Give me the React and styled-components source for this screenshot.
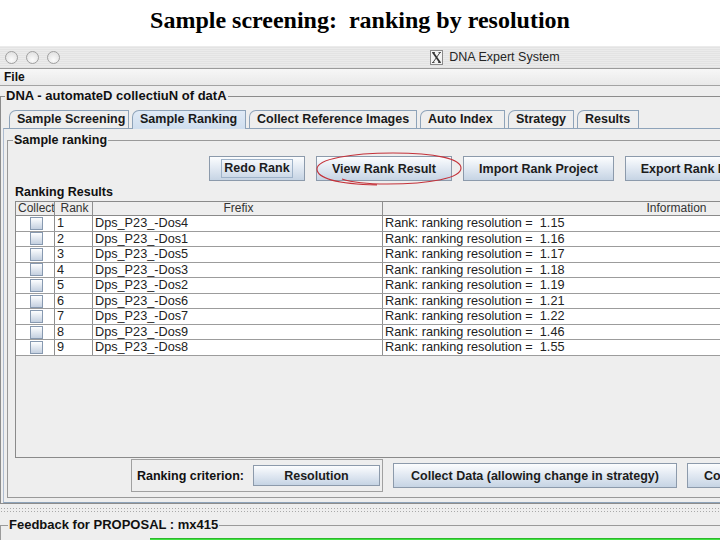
import React from "react";
import styled, { createGlobalStyle } from "styled-components";

const GlobalStyle = createGlobalStyle`
  html, body {
    margin: 0;
    padding: 0;
    background: #fff;
  }
  body {
    width: 720px;
    height: 540px;
    overflow: hidden;
    font-family: "Liberation Sans", Arial, sans-serif;
  }
`;

const Page = styled.div`
  width: 720px;
  height: 540px;
  overflow: hidden;
  display: flex;
  flex-direction: column;
`;

const Heading = styled.h1`
  margin: 0;
  height: 46px;
  box-sizing: border-box;
  padding-top: 6px;
  font-family: "Liberation Serif", "Times New Roman", serif;
  font-size: 24px;
  font-weight: bold;
  line-height: 28px;
  text-align: center;
  white-space: pre;
  color: #000;
  flex: none;
`;

const Window = styled.div`
  width: 990px;
  flex: 1;
  background: #eeeeee;
  display: flex;
  flex-direction: column;
`;

const TitleBar = styled.div`
  height: 22px;
  flex: none;
  border-bottom: 1px solid #9b9b9b;
  display: grid;
  grid-template-columns: 1fr auto 1fr;
  align-items: center;
  background: repeating-linear-gradient(
    to bottom,
    #ebebeb 0px,
    #ebebeb 1px,
    #e3e3e3 1px,
    #e3e3e3 2px
  );
`;

const Lights = styled.div`
  display: flex;
  gap: 8px;
  padding-left: 5px;
`;

const Light = styled.span`
  width: 13px;
  height: 13px;
  box-sizing: border-box;
  border-radius: 50%;
  border: 1px solid #9f9f9f;
  background: radial-gradient(circle at 50% 70%, #fbfbfb, #dcdcdc);
`;

const WindowTitle = styled.div`
  display: flex;
  align-items: center;
  gap: 6px;
  font-size: 12.5px;
  color: #262626;
`;

const MenuBar = styled.div`
  height: 16px;
  flex: none;
  border-bottom: 1px solid #a3a3a3;
  background: linear-gradient(#f7f7f7, #e9e9e9);
  padding-left: 4px;
  font-size: 12px;
  font-weight: bold;
  line-height: 16px;
  color: #111;
`;

const Group = styled.fieldset`
  margin: 0;
  padding: 0;
  min-width: 0;
  border: 1px solid ${(p) => p.$line || "#9a9a9a"};
  ${(p) => (p.$noBottom ? "border-bottom: none;" : "")}
`;

const Caption = styled.legend`
  padding: 0 1px;
  margin-left: ${(p) => p.$indent || 0}px;
  font-size: ${(p) => p.$size || 12.5}px;
  font-weight: bold;
  line-height: 16px;
  color: #111;
  white-space: nowrap;
`;

const Outer = styled(Group)`
  margin-top: 2px;
  flex: none;
`;

const TabPane = styled.div`
  margin: 6px 0 0 2px;
  display: flex;
  flex-direction: column;
`;

const TabStrip = styled.div`
  display: flex;
  gap: 3px;
  padding-left: 6px;
  height: 18px;
`;

const Tab = styled.div`
  position: relative;
  z-index: ${(p) => (p.$active ? 1 : 0)};
  width: ${(p) => p.$w}px;
  height: ${(p) => (p.$active ? 19 : 18)}px;
  box-sizing: border-box;
  flex: none;
  border: 1px solid #8ea3b9;
  border-bottom: none;
  border-top-left-radius: 7px;
  background: ${(p) =>
    p.$active ? "linear-gradient(#e0eaf6, #cfdeee)" : "#eeeeee"};
  padding-left: 7px;
  font-size: 12.5px;
  font-weight: bold;
  line-height: 17px;
  color: #1a1a1a;
  white-space: nowrap;
  overflow: hidden;
`;

const TabBody = styled.div`
  border: 1px solid #8ea3b9;
  border-left-color: #aebcd0;
  border-right: none;
  padding: 3px 0 4px 3px;
`;

const ButtonRow = styled.div`
  position: relative;
  display: flex;
  gap: 11px;
  padding: 8px 0 0 201px;
`;

const Button = styled.button`
  width: ${(p) => p.$w}px;
  height: ${(p) => p.$h || 25}px;
  box-sizing: border-box;
  flex: none;
  margin: 0;
  padding: 0;
  border: 1px solid #8c9aab;
  border-radius: 0;
  background: linear-gradient(#fcfdfe, #e3eaf3 45%, #c6d4e4);
  font-family: "Liberation Sans", Arial, sans-serif;
  font-size: 12.5px;
  font-weight: bold;
  color: #1c1c1c;
  white-space: nowrap;
  overflow: hidden;
  display: flex;
  align-items: center;
  justify-content: center;
`;

const Focus = styled.span`
  border: 1px solid #9fb3c9;
  padding: 1px 2px;
  line-height: 15px;
`;

const Annotation = styled.svg`
  position: absolute;
  left: 307px;
  top: 3px;
  pointer-events: none;
`;

const SectionLabel = styled.div`
  margin: 4px 0 0 7px;
  font-size: 12.5px;
  font-weight: bold;
  line-height: 15px;
  color: #111;
`;

const ScrollPane = styled.div`
  margin: 1px 0 0 7px;
  height: 257px;
  box-sizing: border-box;
  border: 1px solid #8a8a8a;
  border-right: none;
  background: #eeeeee;
  overflow: hidden;
`;

const Row = styled.div`
  display: grid;
  grid-template-columns: 39px 38px 290px 586px;
  height: ${(p) => (p.$head ? 14 : 15.55)}px;
  box-sizing: border-box;
  border-bottom: 1px solid ${(p) => (p.$head ? "#8a8a8a" : "#9c9c9c")};
  background: ${(p) => (p.$head ? "#eeeeee" : "#fff")};
  width: 953px;
`;

const Cell = styled.div`
  border-right: 1px solid #8f8f8f;
  padding-left: 2px;
  font-size: ${(p) => (p.$head ? 12 : 12.7)}px;
  line-height: ${(p) => (p.$head ? 13 : 14.5)}px;
  color: ${(p) => (p.$head ? "#333" : "#222")};
  white-space: pre;
  overflow: hidden;
  display: flex;
  align-items: center;
  justify-content: ${(p) => (p.$center ? "center" : "flex-start")};
`;

const Check = styled.span`
  width: 13px;
  height: 13px;
  box-sizing: border-box;
  border: 1px solid #8799b0;
  background: linear-gradient(#fdfeff, #c4d0e0);
`;

const BottomRow = styled.div`
  margin-top: 1px;
  display: flex;
  align-items: center;
  gap: 10px;
  padding: 0 0 5px 123px;
`;

const CriterionPanel = styled.div`
  width: 252px;
  height: 33px;
  box-sizing: border-box;
  flex: none;
  border: 1px solid #a0a0a0;
  display: flex;
  align-items: center;
  gap: 9px;
  padding-left: 5px;
  font-size: 12.5px;
  font-weight: bold;
  color: #111;
`;

const Divider = styled.div`
  height: 6px;
  margin-top: 3px;
  flex: none;
  background-image: radial-gradient(#a9a9a9 0.7px, transparent 0.9px);
  background-size: 3px 3px;
`;

const Feedback = styled(Group)`
  margin-top: 4px;
  flex: 1;
`;

const ProgressBar = styled.div`
  margin: 5px 0 0 149px;
  height: 12px;
  background: #3fe23f;
  border-top: 1px solid #2cb82c;
`;

const XIcon = () => (
  <svg width="13" height="15" viewBox="0 0 13 15">
    <rect x="0.5" y="0.5" width="12" height="14" fill="#f3f3f3" stroke="#8a8a8a" />
    <path d="M3 2.5 L10 12.5" stroke="#333" strokeWidth="1.8" />
    <path d="M10 2.5 L3 12.5" stroke="#333" strokeWidth="0.9" />
    <path d="M2 2.5 H5 M8.5 2.5 H11 M2 12.5 H4.5 M8 12.5 H11" stroke="#333" strokeWidth="0.8" />
  </svg>
);

const tabs = [
  { label: "Sample Screening", w: 120 },
  { label: "Sample Ranking", w: 114, active: true },
  { label: "Collect Reference Images", w: 168 },
  { label: "Auto Index", w: 85 },
  { label: "Strategy", w: 66 },
  { label: "Results", w: 62 },
];

const results = [
  ["1", "Dps_P23_-Dos4", "1.15"],
  ["2", "Dps_P23_-Dos1", "1.16"],
  ["3", "Dps_P23_-Dos5", "1.17"],
  ["4", "Dps_P23_-Dos3", "1.18"],
  ["5", "Dps_P23_-Dos2", "1.19"],
  ["6", "Dps_P23_-Dos6", "1.21"],
  ["7", "Dps_P23_-Dos7", "1.22"],
  ["8", "Dps_P23_-Dos9", "1.46"],
  ["9", "Dps_P23_-Dos8", "1.55"],
];

const App = () => {
  return (
    <Page>
      <GlobalStyle />
      <Heading>{"Sample screening:  ranking by resolution"}</Heading>
      <Window>
        <TitleBar>
          <Lights>
            <Light />
            <Light />
            <Light />
          </Lights>
          <WindowTitle>
            <XIcon />
            DNA Expert System
          </WindowTitle>
          <div />
        </TitleBar>
        <MenuBar>File</MenuBar>

        <Outer $line="#8c8c8c">
          <Caption $indent={4} $size={13}>
            DNA - automateD collectiuN of datA
          </Caption>
          <TabPane>
            <TabStrip>
              {tabs.map((t) => (
                <Tab key={t.label} $w={t.w} $active={t.active}>
                  {t.label}
                </Tab>
              ))}
            </TabStrip>
            <TabBody>
              <Group $line="#999">
                <Caption $indent={5}>Sample ranking</Caption>
                <ButtonRow>
                  <Button $w={96}>
                    <Focus>Redo Rank</Focus>
                  </Button>
                  <Button $w={136}>View Rank Result</Button>
                  <Button $w={151}>Import Rank Project</Button>
                  <Button $w={151}>Export Rank Project</Button>
                  <Annotation width="148" height="36" viewBox="0 0 148 36">
                    <path
                      d="M62 34 C22 33 2 27 2 18 C2 8 36 2 78 2 C121 2 146 8 146 17 C146 27 116 33 72 33 C52 33 36 31 27 28"
                      fill="none"
                      stroke="#c4323a"
                      strokeWidth="1.1"
                    />
                  </Annotation>
                </ButtonRow>

                <SectionLabel>Ranking Results</SectionLabel>
                <ScrollPane>
                  <Row $head>
                    <Cell $head>Collect</Cell>
                    <Cell $head $center>Rank</Cell>
                    <Cell $head $center>Frefix</Cell>
                    <Cell $head $center>Information</Cell>
                  </Row>
                  {results.map(([rank, prefix, res]) => (
                    <Row key={rank}>
                      <Cell $center>
                        <Check />
                      </Cell>
                      <Cell>{rank}</Cell>
                      <Cell>{prefix}</Cell>
                      <Cell>{`Rank: ranking resolution =  ${res}`}</Cell>
                    </Row>
                  ))}
                </ScrollPane>

                <BottomRow>
                  <CriterionPanel>
                    Ranking criterion:
                    <Button $w={127} $h={21}>
                      Resolution
                    </Button>
                  </CriterionPanel>
                  <Button $w={284}>Collect Data (allowing change in strategy)</Button>
                  <Button $w={106}>Collect Data</Button>
                </BottomRow>
              </Group>
            </TabBody>
          </TabPane>
        </Outer>

        <Divider />

        <Feedback $line="#9a9a9a" $noBottom>
          <Caption $indent={7} $size={13}>
            Feedback for PROPOSAL : mx415
          </Caption>
          <ProgressBar />
        </Feedback>
      </Window>
    </Page>
  );
};

export default App;
